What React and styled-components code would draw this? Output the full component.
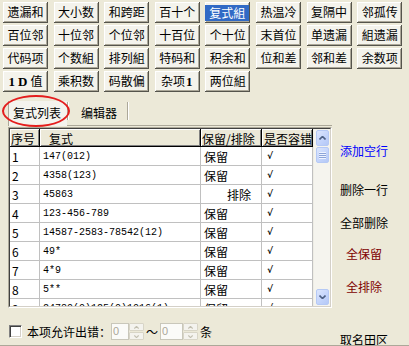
import React from 'react';
import styled, { createGlobalStyle, css } from 'styled-components';

const GlobalStyle = createGlobalStyle`
  html, body {
    margin: 0;
    padding: 0;
    background: #ece9d8;
  }
  body {
    font-family: "Noto Sans CJK SC", "Liberation Sans", sans-serif;
    font-size: 12px;
    color: #000;
    overflow: hidden;
  }
`;

const Window = styled.div`
  width: 409px;
  height: 346px;
  overflow: hidden;
  background: #ece9d8;
  display: flex;
  flex-direction: column;
  box-sizing: border-box;
  border-bottom: 1px solid #aca899;
`;

const ButtonGrid = styled.div`
  display: grid;
  grid-template-columns: repeat(8, 45px);
  grid-auto-rows: 21px;
  column-gap: 5.6px;
  row-gap: 2px;
  padding: 2px 0 0 3px;
`;

const KeyButton = styled.div`
  box-sizing: border-box;
  display: flex;
  align-items: center;
  justify-content: center;
  background: #f4f3ec;
  box-shadow: inset -1px -1px #55544c, inset 1px 1px #fff, inset -2px -2px #aca899;
  font-size: 12px;
  line-height: 1;
  white-space: nowrap;
  padding: 0 0 1px 0;
  ${p => p.$active && css`
    padding: 3px 1px 2px 0;
  `}
`;

const KeyLabel = styled.span`
  display: flex;
  align-items: center;
  justify-content: center;
  ${p => p.$active && css`
    align-self: stretch;
    flex: 1;
    background: #316ac5;
    color: #fff;
  `}
`;

const Strong = styled.b`
  font-family: "Liberation Serif", serif;
  font-weight: bold;
  font-size: 13px;
  margin: 0 ${p => p.$space || 0}px;
`;

const TabBar = styled.div`
  display: flex;
  align-items: stretch;
  height: 26px;
  width: 324px;
  margin: 7px 0 0 8px;
  border-bottom: 1px solid #aca899;
`;

const Tab = styled.div`
  position: relative;
  display: flex;
  align-items: center;
  padding: 0 ${p => p.$right}px 2px ${p => p.$left}px;
  margin-top: 2px;
  ${p => p.$active && css`
    background: #f4f3ee;
    border-left: 1px solid #aca899;
    margin-bottom: -1px;
  `}
`;

const TabSep = styled.div`
  width: 1px;
  background: #aca899;
  box-shadow: 1px 0 #fff;
  margin: 3px 0 5px;
`;

const Ring = styled.div`
  position: absolute;
  left: -7px;
  top: -6px;
  width: 68px;
  height: 32px;
  box-sizing: border-box;
  border: 2px solid #e41d1d;
  border-radius: 50%;
  pointer-events: none;
`;

const Body = styled.div`
  display: flex;
  align-items: flex-start;
`;

const LeftColumn = styled.div`
  width: 324px;
  margin: 1px 0 0 8px;
  display: flex;
  flex-direction: column;
`;

const ListFrame = styled.div`
  box-sizing: border-box;
  height: 181px;
  border: 1px solid;
  border-color: #aca899 #fff #fff #aca899;
`;

const ListInner = styled.div`
  box-sizing: border-box;
  height: 100%;
  display: flex;
  border: 1px solid;
  border-color: #404040 #d4d0c8 #d4d0c8 #404040;
  background: #fff;
`;

const Grid = styled.div`
  width: 303px;
  overflow: hidden;
`;

const Row = styled.div`
  display: grid;
  grid-template-columns: 30px 161px 61px 51px;
  height: ${p => (p.$head ? 18 : 19)}px;
`;

const HeadCell = styled.div`
  box-sizing: border-box;
  display: flex;
  align-items: center;
  padding-left: ${p => p.$pad}px;
  background: #ece9d8;
  box-shadow: inset -1px -1px #000, inset 1px 1px #fff, inset -2px -2px #808080;
  font-size: 12px;
  white-space: nowrap;
`;

const Cell = styled.div`
  box-sizing: border-box;
  display: flex;
  align-items: center;
  justify-content: ${p => (p.$right ? 'flex-end' : 'flex-start')};
  padding: 0 ${p => (p.$right ? 10 : 0)}px 0 ${p => p.$pad}px;
  border-right: 1px solid #c0c0c0;
  border-bottom: 1px solid #c0c0c0;
  font-size: 12px;
  white-space: nowrap;
  overflow: hidden;
  ${p => p.$code && css`
    font-family: "Liberation Mono", monospace;
    font-size: 10px;
  `}
  ${p => p.$tick && css`
    font-family: "DejaVu Sans", sans-serif;
    font-size: 9px;
    font-weight: bold;
  `}
`;

const ScrollBar = styled.div`
  width: 17px;
  box-sizing: border-box;
  padding: 1px 1px 1px 2px;
  display: flex;
  flex-direction: column;
  justify-content: space-between;
  background: #f5f4ee;
  border-left: 1px solid #eeede5;
`;

const ScrollTop = styled.div`
  display: flex;
  flex-direction: column;
  gap: 1px;
`;

const ScrollBtn = styled.div`
  height: 16px;
  border-radius: 2px;
  border: 1px solid #b5c9f5;
  box-sizing: border-box;
  background: linear-gradient(135deg, #dce6fd 0%, #c2d3fb 60%, #b4c8f6 100%);
  display: flex;
  align-items: center;
  justify-content: center;
`;

const Grip = styled.div`
  width: 7px;
  height: 7px;
  background: repeating-linear-gradient(#eef3ff 0 1px, #8ca4d8 1px 2px);
`;

const BottomBar = styled.div`
  display: flex;
  align-items: center;
  height: 27px;
  margin-top: 10px;
  padding-left: 1px;
  white-space: nowrap;
`;

const CheckBox = styled.div`
  width: 13px;
  height: 13px;
  box-sizing: border-box;
  background: #fff;
  border: 1px solid;
  border-color: #808080 #fff #fff #808080;
  box-shadow: inset 1px 1px #404040, inset -1px -1px #d4d0c8;
  margin-right: 5px;
`;

const Spin = styled.div`
  display: flex;
  height: 17px;
  margin: 0 2px 0 ${p => p.$ml || 0}px;
`;

const SpinInput = styled.div`
  width: ${p => p.$w}px;
  box-sizing: border-box;
  border: 1px solid #c9c7ba;
  background: #fbfbf8;
  color: #aca899;
  font-family: "Liberation Sans", sans-serif;
  font-size: 11px;
  padding-left: 1px;
  line-height: 15px;
`;

const SpinButtons = styled.div`
  width: 15px;
  display: flex;
  flex-direction: column;
  gap: 1px;
`;

const SpinArrow = styled.div`
  flex: 1;
  background: #f4f3ee;
  border: 1px solid #d8d5c7;
  border-radius: 1px;
  display: flex;
  align-items: center;
  justify-content: center;
`;

const RightPanel = styled.div`
  width: 64px;
  height: 218px;
  display: flex;
  flex-direction: column;
  align-items: center;
  overflow: visible;
`;

const Action = styled.div`
  font-size: 12px;
  line-height: 16px;
  white-space: nowrap;
  margin-top: ${p => p.$mt}px;
  color: ${p => p.$color || '#000'};
`;

const Arrow = ({ down, color = '#4d6185', w = 7, h = 4 }) => (
  <svg width={w} height={h} viewBox="0 0 7 4">
    <path d={down ? 'M0.5 0.5 L3.5 3.5 L6.5 0.5' : 'M0.5 3.5 L3.5 0.5 L6.5 3.5'} fill="none" stroke={color} strokeWidth="1.6" />
  </svg>
);

const keys = [
  '遗漏和', '大小数', '和跨距', '百十个', '复式組', '热温冷', '复隔中', '邻孤传',
  '百位邻', '十位邻', '个位邻', '十百位', '个十位', '末首位', '单遗漏', '組遗漏',
  '代码项', '个数組', '排列組', '特码和', '积余和', '位和差', '邻和差', '余数项',
  'ONED', '乘积数', '码散偏', 'ZAXIANG', '两位組',
];

const rows = [
  ['1', '147(012)', '保留'],
  ['2', '4358(123)', '保留'],
  ['3', '45863', '排除'],
  ['4', '123-456-789', '保留'],
  ['5', '14587-2583-78542(12)', '保留'],
  ['6', '49*', '保留'],
  ['7', '4*9', '保留'],
  ['8', '5**', '保留'],
  ['9', '24789(0)125(0)1016(1)', '保留'],
];

const renderKey = k => {
  if (k === 'ONED') return <><Strong>1</Strong><Strong $space={3}>D</Strong>值</>;
  if (k === 'ZAXIANG') return <>杂项<Strong $space={1}>1</Strong></>;
  return k;
};

const SpinBox = ({ w, ml }) => (
  <Spin $ml={ml}>
    <SpinInput $w={w}>0</SpinInput>
    <SpinButtons>
      <SpinArrow><Arrow color="#c2bfb0" w={5} h={3} /></SpinArrow>
      <SpinArrow><Arrow down color="#c2bfb0" w={5} h={3} /></SpinArrow>
    </SpinButtons>
  </Spin>
);

export default function App() {
  return (
    <>
      <GlobalStyle />
      <Window>
        <ButtonGrid>
          {keys.map(k => (
            <KeyButton key={k} $active={k === '复式組'}>
              <KeyLabel $active={k === '复式組'}>{renderKey(k)}</KeyLabel>
            </KeyButton>
          ))}
        </ButtonGrid>

        <TabBar>
          <Tab $active $left={4} $right={6}>
            复式列表
            <Ring />
          </Tab>
          <TabSep />
          <Tab $left={13} $right={10}>编辑器</Tab>
          <TabSep />
        </TabBar>

        <Body>
          <LeftColumn>
            <ListFrame>
              <ListInner>
                <Grid>
                  <Row $head>
                    <HeadCell $pad={1}>序号</HeadCell>
                    <HeadCell $pad={9}>复式</HeadCell>
                    <HeadCell $pad={1}>保留/排除</HeadCell>
                    <HeadCell $pad={2}>是否容错</HeadCell>
                  </Row>
                  {rows.map(([n, code, keep]) => (
                    <Row key={n}>
                      <Cell $pad={2}>{n}</Cell>
                      <Cell $pad={3} $code>{code}</Cell>
                      <Cell $pad={3} $right={keep === '排除'}>{keep}</Cell>
                      <Cell $pad={5} $tick>√</Cell>
                    </Row>
                  ))}
                </Grid>
                <ScrollBar>
                  <ScrollTop>
                    <ScrollBtn><Arrow /></ScrollBtn>
                    <ScrollBtn><Grip /></ScrollBtn>
                  </ScrollTop>
                  <ScrollBtn><Arrow down /></ScrollBtn>
                </ScrollBar>
              </ListInner>
            </ListFrame>

            <BottomBar>
              <CheckBox />
              本项允许出错：
              <SpinBox w={18} />
              ～
              <SpinBox w={23} ml={2} />
              条
            </BottomBar>
          </LeftColumn>

          <RightPanel>
            <Action $mt={17} $color="#0000ff">添加空行</Action>
            <Action $mt={23}>删除一行</Action>
            <Action $mt={17}>全部删除</Action>
            <Action $mt={15} $color="#800000">全保留</Action>
            <Action $mt={17} $color="#800000">全排除</Action>
            <Action $mt={37}>取名田区</Action>
          </RightPanel>
        </Body>
      </Window>
    </>
  );
}
